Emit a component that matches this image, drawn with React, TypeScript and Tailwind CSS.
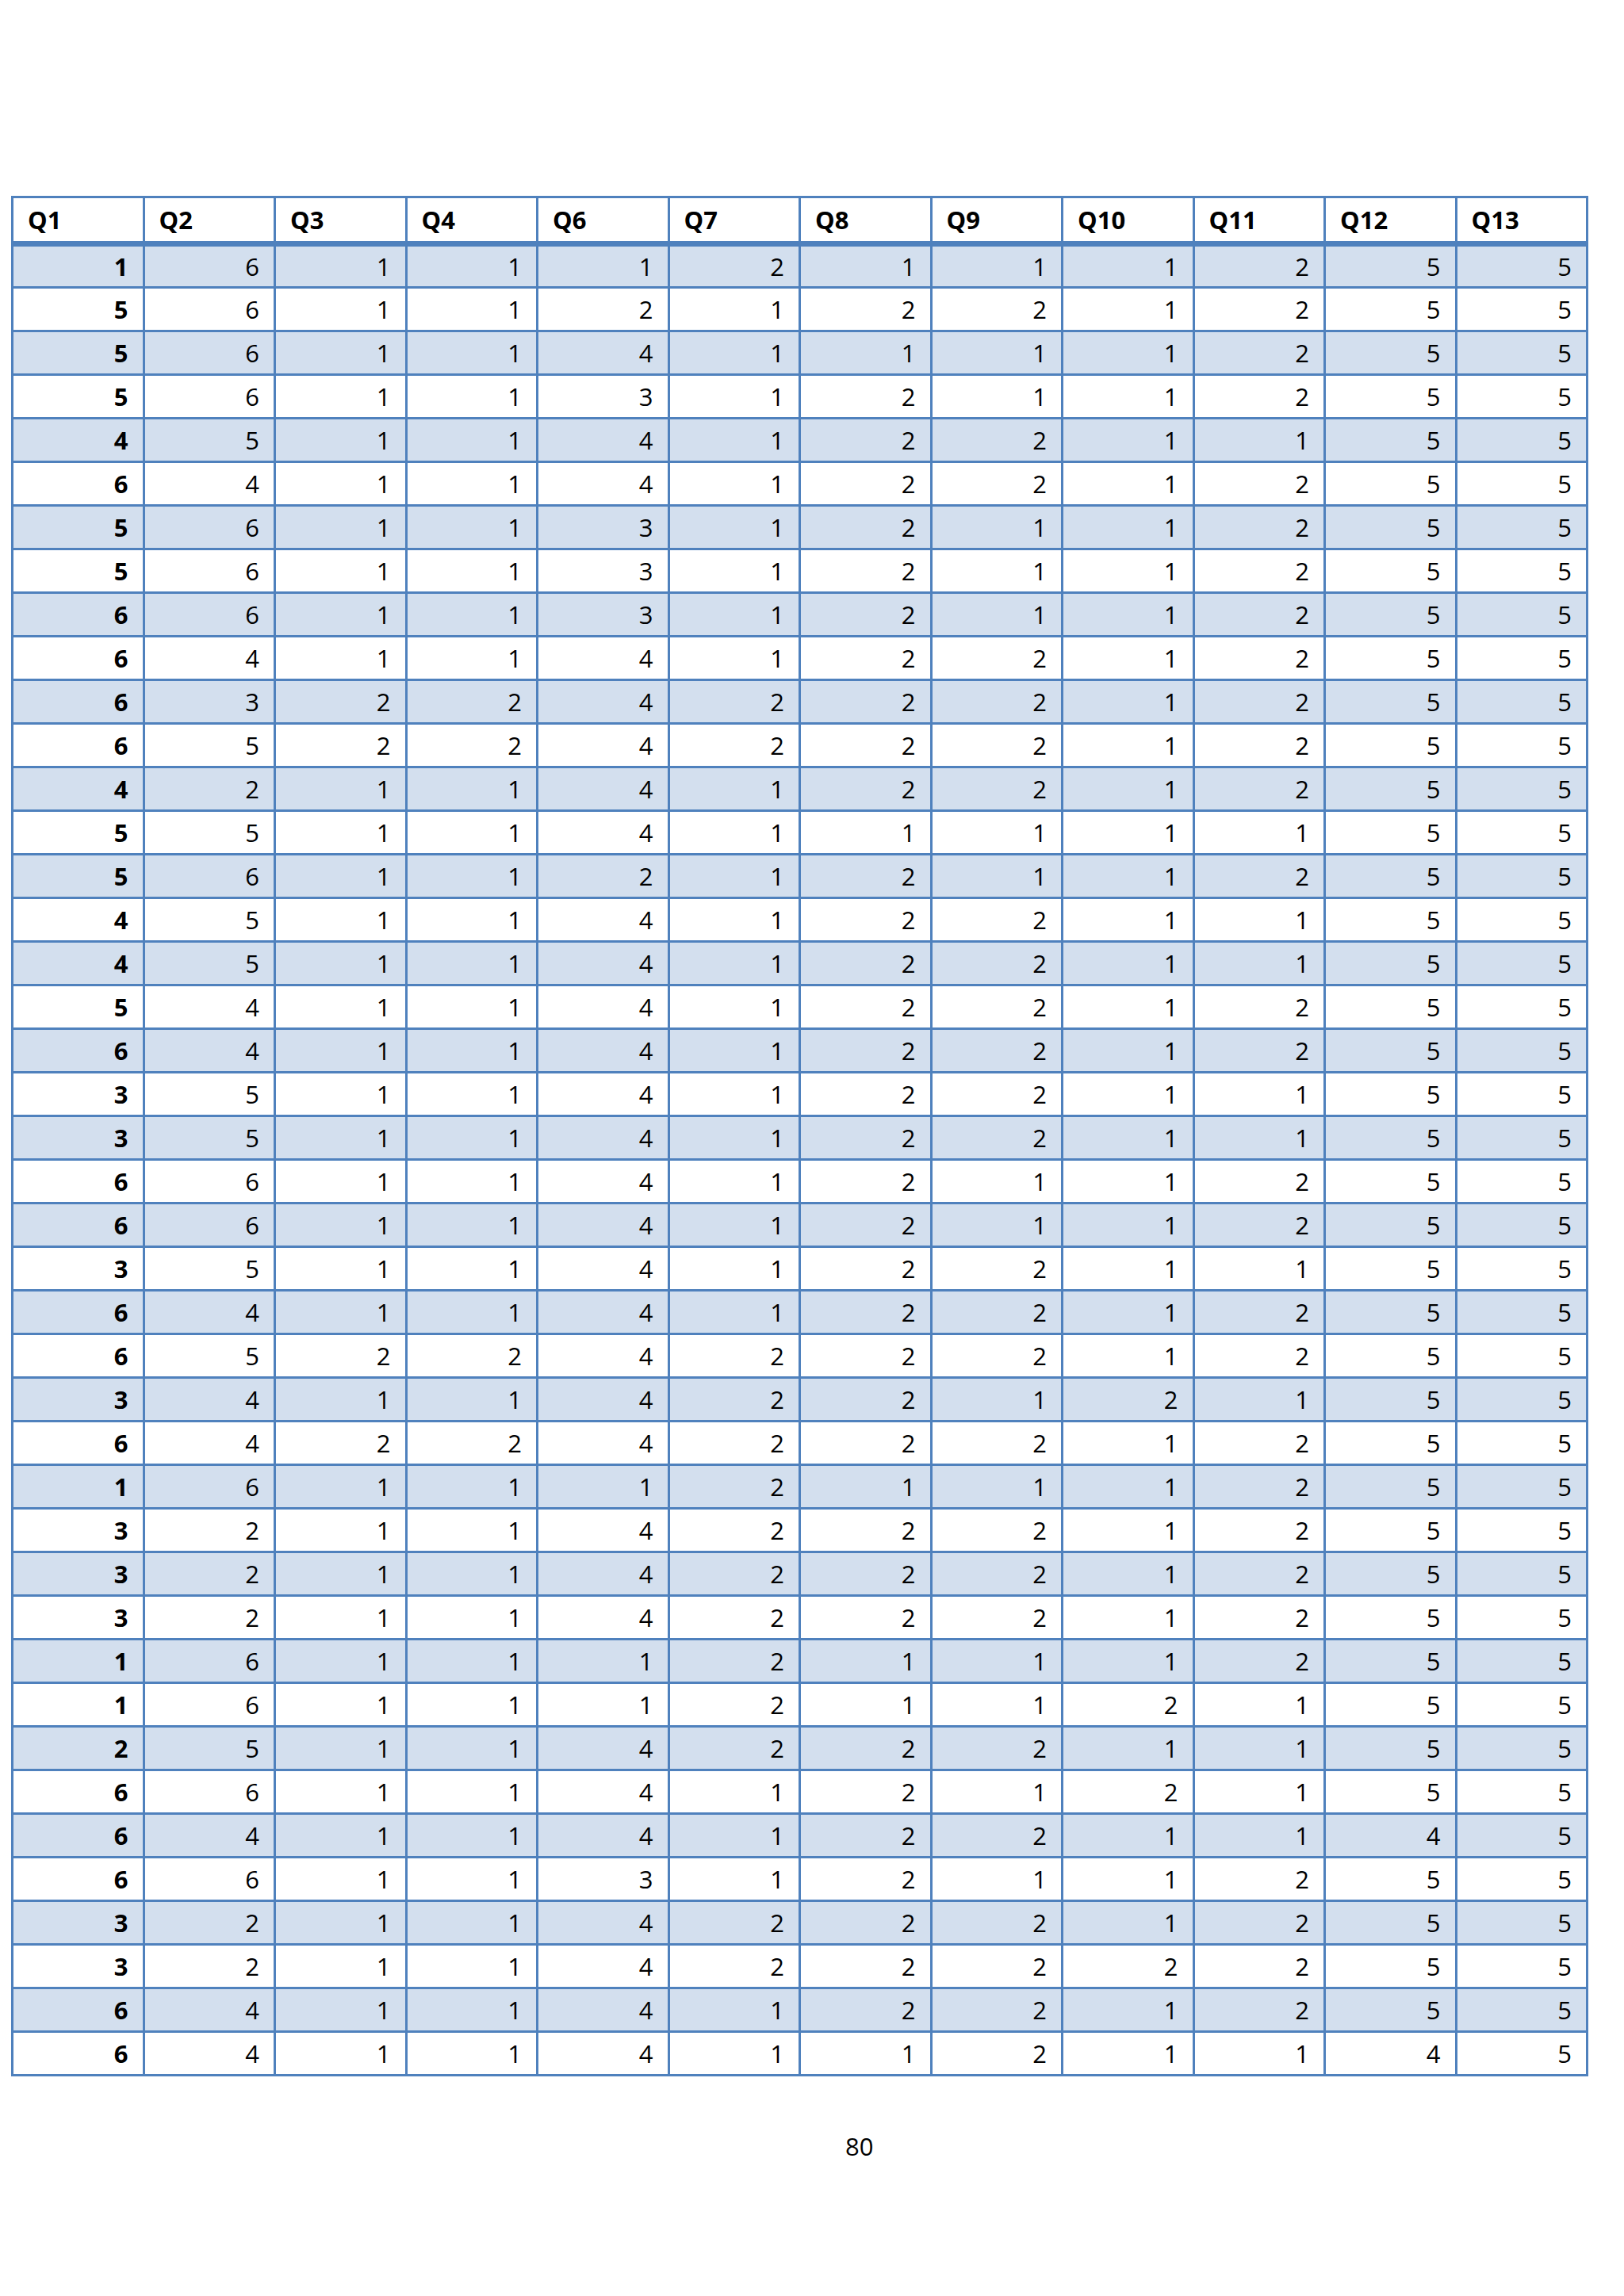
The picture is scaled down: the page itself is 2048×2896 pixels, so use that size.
import React from "react";

const headers = ["Q1", "Q2", "Q3", "Q4", "Q6", "Q7", "Q8", "Q9", "Q10", "Q11", "Q12", "Q13"];

const rows: number[][] = [
  [1, 6, 1, 1, 1, 2, 1, 1, 1, 2, 5, 5],
  [5, 6, 1, 1, 2, 1, 2, 2, 1, 2, 5, 5],
  [5, 6, 1, 1, 4, 1, 1, 1, 1, 2, 5, 5],
  [5, 6, 1, 1, 3, 1, 2, 1, 1, 2, 5, 5],
  [4, 5, 1, 1, 4, 1, 2, 2, 1, 1, 5, 5],
  [6, 4, 1, 1, 4, 1, 2, 2, 1, 2, 5, 5],
  [5, 6, 1, 1, 3, 1, 2, 1, 1, 2, 5, 5],
  [5, 6, 1, 1, 3, 1, 2, 1, 1, 2, 5, 5],
  [6, 6, 1, 1, 3, 1, 2, 1, 1, 2, 5, 5],
  [6, 4, 1, 1, 4, 1, 2, 2, 1, 2, 5, 5],
  [6, 3, 2, 2, 4, 2, 2, 2, 1, 2, 5, 5],
  [6, 5, 2, 2, 4, 2, 2, 2, 1, 2, 5, 5],
  [4, 2, 1, 1, 4, 1, 2, 2, 1, 2, 5, 5],
  [5, 5, 1, 1, 4, 1, 1, 1, 1, 1, 5, 5],
  [5, 6, 1, 1, 2, 1, 2, 1, 1, 2, 5, 5],
  [4, 5, 1, 1, 4, 1, 2, 2, 1, 1, 5, 5],
  [4, 5, 1, 1, 4, 1, 2, 2, 1, 1, 5, 5],
  [5, 4, 1, 1, 4, 1, 2, 2, 1, 2, 5, 5],
  [6, 4, 1, 1, 4, 1, 2, 2, 1, 2, 5, 5],
  [3, 5, 1, 1, 4, 1, 2, 2, 1, 1, 5, 5],
  [3, 5, 1, 1, 4, 1, 2, 2, 1, 1, 5, 5],
  [6, 6, 1, 1, 4, 1, 2, 1, 1, 2, 5, 5],
  [6, 6, 1, 1, 4, 1, 2, 1, 1, 2, 5, 5],
  [3, 5, 1, 1, 4, 1, 2, 2, 1, 1, 5, 5],
  [6, 4, 1, 1, 4, 1, 2, 2, 1, 2, 5, 5],
  [6, 5, 2, 2, 4, 2, 2, 2, 1, 2, 5, 5],
  [3, 4, 1, 1, 4, 2, 2, 1, 2, 1, 5, 5],
  [6, 4, 2, 2, 4, 2, 2, 2, 1, 2, 5, 5],
  [1, 6, 1, 1, 1, 2, 1, 1, 1, 2, 5, 5],
  [3, 2, 1, 1, 4, 2, 2, 2, 1, 2, 5, 5],
  [3, 2, 1, 1, 4, 2, 2, 2, 1, 2, 5, 5],
  [3, 2, 1, 1, 4, 2, 2, 2, 1, 2, 5, 5],
  [1, 6, 1, 1, 1, 2, 1, 1, 1, 2, 5, 5],
  [1, 6, 1, 1, 1, 2, 1, 1, 2, 1, 5, 5],
  [2, 5, 1, 1, 4, 2, 2, 2, 1, 1, 5, 5],
  [6, 6, 1, 1, 4, 1, 2, 1, 2, 1, 5, 5],
  [6, 4, 1, 1, 4, 1, 2, 2, 1, 1, 4, 5],
  [6, 6, 1, 1, 3, 1, 2, 1, 1, 2, 5, 5],
  [3, 2, 1, 1, 4, 2, 2, 2, 1, 2, 5, 5],
  [3, 2, 1, 1, 4, 2, 2, 2, 2, 2, 5, 5],
  [6, 4, 1, 1, 4, 1, 2, 2, 1, 2, 5, 5],
  [6, 4, 1, 1, 4, 1, 1, 2, 1, 1, 4, 5],
];

export default function App() {
  return (
    <div
      className="w-[2048px] min-h-[2896px] bg-white text-black"
      style={{ fontFamily: '"Open Sans", "Noto Sans", sans-serif' }}
    >
      <div className="pt-[247px] pl-[14px]">
        <table className="table-fixed border-collapse w-[1986px] text-[31px] leading-none">
          <colgroup>
            {headers.map((h) => (
              <col key={h} className="w-[165.5px]" />
            ))}
          </colgroup>
          <thead>
            <tr className="h-[59px]">
              {headers.map((h) => (
                <th
                  key={h}
                  className="border-[3px] border-b-[7px] border-[#4f81bd] text-left font-bold pl-[18px] pr-0 py-0 align-middle"
                >
                  {h}
                </th>
              ))}
            </tr>
          </thead>
          <tbody>
            {rows.map((r, i) => (
              <tr key={i} className={i % 2 === 0 ? "h-[55px] bg-[#d3dfee]" : "h-[55px] bg-white"}>
                {r.map((v, j) => (
                  <td
                    key={j}
                    className={
                      j === 0
                        ? "border-[3px] border-[#4f81bd] text-right font-bold pr-[18px] pl-0 py-0 align-middle"
                        : "border-[3px] border-[#4f81bd] text-right font-normal pr-[18px] pl-0 py-0 align-middle"
                    }
                  >
                    {v}
                  </td>
                ))}
              </tr>
            ))}
          </tbody>
        </table>
      </div>
      <div className="pt-[68px] pl-[1066px] text-[31px] leading-[40px]">80</div>
    </div>
  );
}
